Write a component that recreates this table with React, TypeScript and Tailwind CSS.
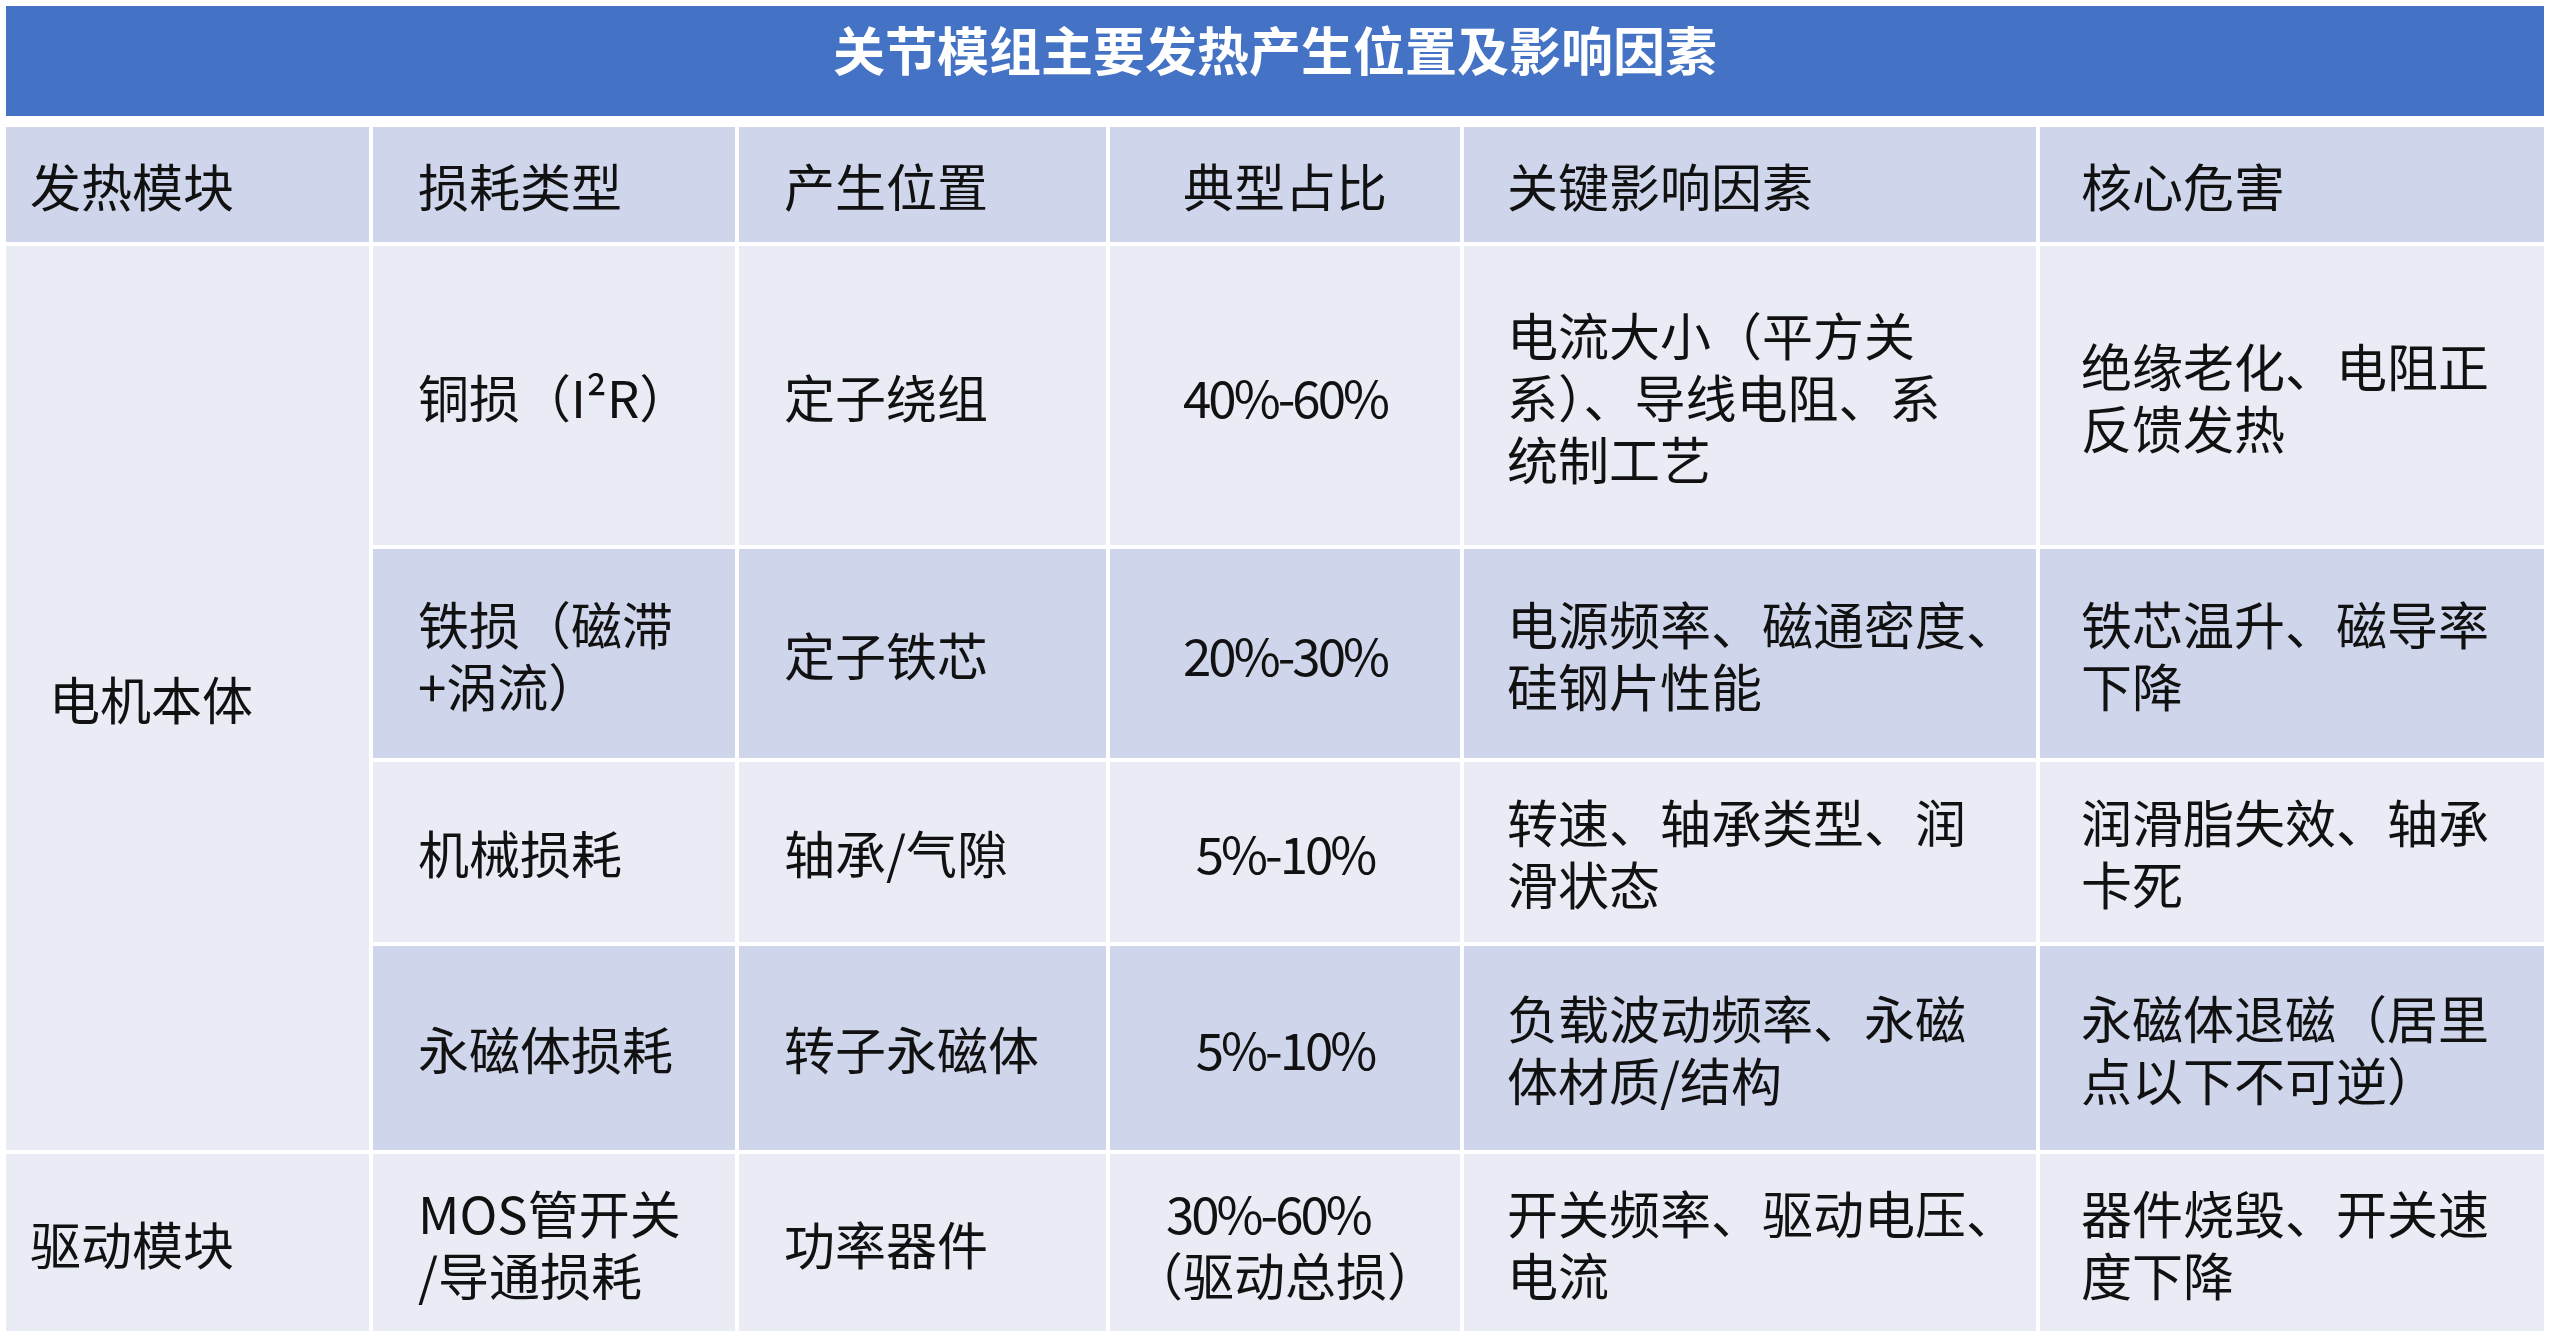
const LIGHT = "bg-[#e9ebf5]";
const DARK = "bg-[#cfd5ea]";

type Row = {
  loss: string[];
  pos: string[];
  ratio: string[];
  factor: string[];
  harm: string[];
  dark: boolean;
};

const motorRows: Row[] = [
  {
    loss: ["铜损（I²R）"],
    pos: ["定子绕组"],
    ratio: ["40%-60%"],
    factor: ["电流大小（平方关", "系）、导线电阻、系", "统制工艺"],
    harm: ["绝缘老化、电阻正", "反馈发热"],
    dark: false,
  },
  {
    loss: ["铁损（磁滞", "+涡流）"],
    pos: ["定子铁芯"],
    ratio: ["20%-30%"],
    factor: ["电源频率、磁通密度、", "硅钢片性能"],
    harm: ["铁芯温升、磁导率", "下降"],
    dark: true,
  },
  {
    loss: ["机械损耗"],
    pos: ["轴承/气隙"],
    ratio: ["5%-10%"],
    factor: ["转速、轴承类型、润", "滑状态"],
    harm: ["润滑脂失效、轴承", "卡死"],
    dark: false,
  },
  {
    loss: ["永磁体损耗"],
    pos: ["转子永磁体"],
    ratio: ["5%-10%"],
    factor: ["负载波动频率、永磁", "体材质/结构"],
    harm: ["永磁体退磁（居里", "点以下不可逆）"],
    dark: true,
  },
];

function Lines({ lines }: { lines: string[] }) {
  return (
    <div>
      {lines.map((l, i) => (
        <div key={i} className="whitespace-nowrap">
          {l}
        </div>
      ))}
    </div>
  );
}

function Cell({
  lines,
  bg,
  pad = "pl-[45px]",
  center = false,
}: {
  lines: string[];
  bg: string;
  pad?: string;
  center?: boolean;
}) {
  return (
    <div
      className={`${bg} flex items-center ${center ? "justify-center tracking-[-3px]" : pad}`}
    >
      <Lines lines={lines} />
    </div>
  );
}

export default function App() {
  return (
    <div
      className="w-[2560px] h-[1342px] bg-white pl-[6px] pt-[6px] text-[51px] leading-[62px] text-[#111]"
      style={{ fontFamily: '"Noto Sans CJK SC", "Noto Sans", sans-serif' }}
    >
      <div className="w-[2538px]">
        {/* 标题 */}
        <div className="h-[110px] bg-[#4472c4] flex items-center justify-center pb-[24px]">
          <span className="text-white font-bold text-[52px]">
            关节模组主要发热产生位置及影响因素
          </span>
        </div>

        <div className="mt-[11px] grid grid-cols-[363px_362px_367px_350px_572px_504px] grid-rows-[115px_299px_209px_180px_204px_177px] gap-[4px]">
          {/* 表头 */}
          <Cell lines={["发热模块"]} bg={DARK} pad="pl-[24px]" />
          <Cell lines={["损耗类型"]} bg={DARK} />
          <Cell lines={["产生位置"]} bg={DARK} />
          <div className={`${DARK} flex items-center justify-center`}>典型占比</div>
          <Cell lines={["关键影响因素"]} bg={DARK} pad="pl-[43px]" />
          <Cell lines={["核心危害"]} bg={DARK} pad="pl-[41px]" />

          {/* 电机本体 */}
          <div className={`${LIGHT} row-span-4 flex items-center pl-[43px]`}>
            电机本体
          </div>
          {motorRows.map((r, i) => {
            const bg = r.dark ? DARK : LIGHT;
            return [
              <Cell key={`a${i}`} lines={r.loss} bg={bg} />,
              <Cell key={`b${i}`} lines={r.pos} bg={bg} />,
              <Cell key={`c${i}`} lines={r.ratio} bg={bg} center />,
              <Cell key={`d${i}`} lines={r.factor} bg={bg} pad="pl-[43px]" />,
              <Cell key={`e${i}`} lines={r.harm} bg={bg} pad="pl-[41px]" />,
            ];
          })}

          {/* 驱动模块 */}
          <Cell lines={["驱动模块"]} bg={LIGHT} pad="pl-[24px]" />
          <Cell lines={["MOS管开关", "/导通损耗"]} bg={LIGHT} />
          <Cell lines={["功率器件"]} bg={LIGHT} />
          <div className={`${LIGHT} flex items-center justify-center`}>
            <div className="text-left">
              <div className="pl-[34px] whitespace-nowrap tracking-[-3px]">30%-60%</div>
              <div className="whitespace-nowrap">（驱动总损）</div>
            </div>
          </div>
          <Cell lines={["开关频率、驱动电压、", "电流"]} bg={LIGHT} pad="pl-[43px]" />
          <Cell lines={["器件烧毁、开关速", "度下降"]} bg={LIGHT} pad="pl-[41px]" />
        </div>
      </div>
    </div>
  );
}
